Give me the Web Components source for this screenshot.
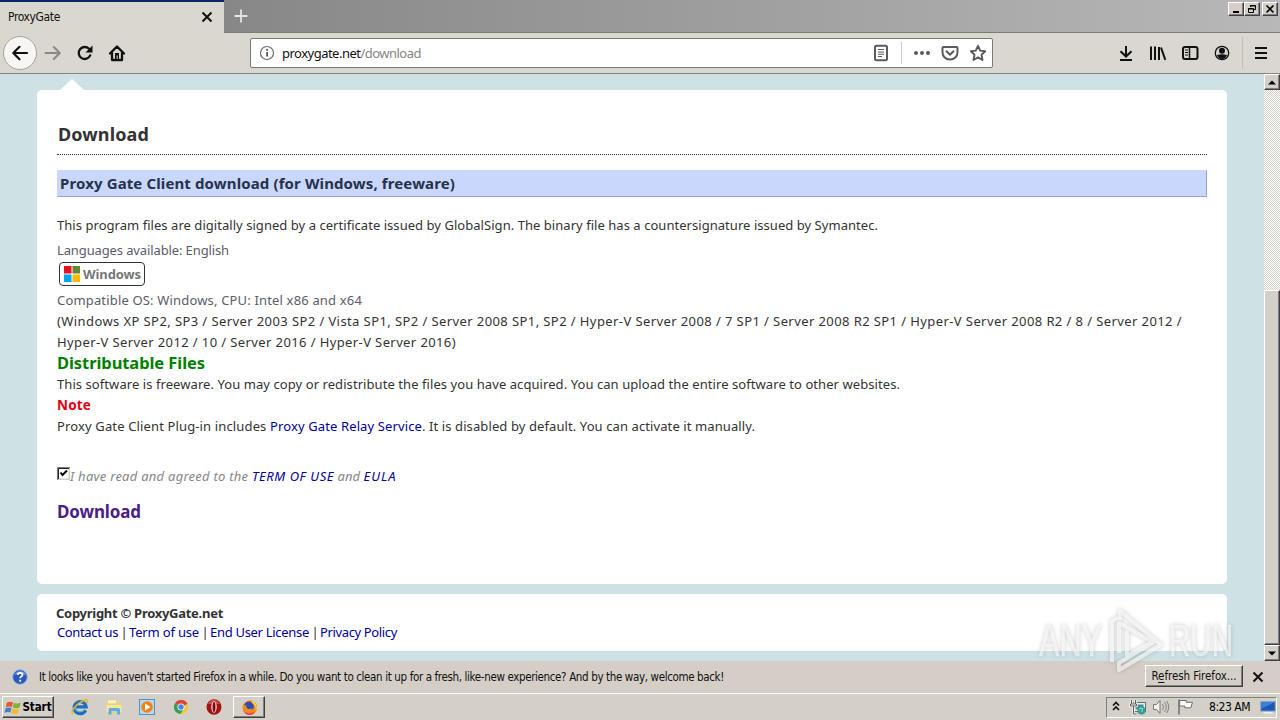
<!DOCTYPE html>
<html lang="en">
<head>
<meta charset="utf-8">
<title>ProxyGate</title>
<style>
	html, body {
		margin: 0;
		height: 100%;
		overflow: hidden;
	}
</style>
</head>
<body>
<desktop-screen></desktop-screen>

<script>
const UI_FONT = `"DejaVu Sans Condensed", "DejaVu Sans", sans-serif`;
const PAGE_FONT = `"Noto Sans", "Open Sans", sans-serif`;

const ICONS = {
	back: `<path d="M17 10H3.500M9.500 3.800L3.300 10l6.200 6.200" fill="none" stroke="#111" stroke-width="2.200" stroke-linecap="round" stroke-linejoin="round"/>`,
	forward: `<path d="M2.500 10H16.500M10.800 4l6 6-6 6" fill="none" stroke="#8b8983" stroke-width="2" stroke-linecap="round" stroke-linejoin="round"/>`,
	reload: `<path d="M15.200 12.400A6 6 0 1 1 14 5.800" fill="none" stroke="#111" stroke-width="2.300" stroke-linecap="round"/><path d="M17.500 2.500V9.500H10.500Z" fill="#111"/>`,
	home: `<path d="M3 10.500L10 3.500l7 7M5 10v7h10v-7" fill="none" stroke="#111" stroke-width="2.300" stroke-linecap="round" stroke-linejoin="round"/><path d="M8 10h4v6H8z" fill="#111"/><path d="M9.700 12.500h1v3.500h-1z" fill="#ddd"/>`,
	info: `<circle cx="10" cy="10" r="6.500" fill="none" stroke="#6a6a6a" stroke-width="1.200"/><path d="M9.200 9h1.800v4.500H9.200zM9.200 6h1.800v1.700H9.200z" fill="#555"/>`,
	reader: `<rect x="4" y="2.800" width="12" height="14.400" rx="1.500" fill="none" stroke="#5a5a5a" stroke-width="2"/><path d="M7 6.500h6M7 9h6M7 11.200h6M7 13.500h4" stroke="#5a5a5a" stroke-width="1"/>`,
	dots: `<g fill="#5a5a5a"><circle cx="4" cy="10" r="2"/><circle cx="10" cy="10" r="2"/><circle cx="16" cy="10" r="2"/></g>`,
	pocket: `<path d="M3.500 4h13q1 0 1 1v4.500a7.500 7 0 0 1-15 0V5q0-1 1-1z" fill="none" stroke="#5a5a5a" stroke-width="2"/><path d="M6.500 8.300l3.500 3.400 3.500-3.400" fill="none" stroke="#5a5a5a" stroke-width="2" stroke-linecap="round" stroke-linejoin="round"/>`,
	star: `<path d="M10 2.800l2.200 4.800 5 .6-3.700 3.500 1 5.300-4.500-2.600L5.500 17l1-5.300L2.800 8.200l5-.6z" fill="none" stroke="#5a5a5a" stroke-width="1.900" stroke-linejoin="round"/>`,
	download: `<path d="M10 3v10M4.500 8.300L10 13.500l5.500-5.200M4 17h12" fill="none" stroke="#111" stroke-width="2"/>`,
	library: `<path d="M3 3.500v13.500M7 3.500v13.500M11 4v13M13 4.500l4.300 12.300" stroke="#111" stroke-width="2" fill="none"/>`,
	sidebar: `<rect x="3" y="4" width="14.500" height="12" rx="2" fill="none" stroke="#111" stroke-width="2"/><path d="M9.500 4v12" stroke="#111" stroke-width="1.500"/><path d="M5 7h3M5 9.500h3M5 12h3" stroke="#111"/>`,
	account: `<circle cx="10" cy="10" r="6.700" fill="none" stroke="#111" stroke-width="1.300"/><circle cx="10" cy="7.800" r="3" fill="#111"/><path d="M5 12q5-1.500 10 0-1.500 4-5 4t-5-4z" fill="#111"/>`,
	menu: `<path d="M4 5h12M4 10h12M4 15h12" stroke="#111" stroke-width="2"/>`,
	close: `<path d="M5.500 5.500l9 9M14.500 5.500l-9 9" stroke="#111" stroke-width="2"/>`,
	plus: `<path d="M10 2v16M2 10h16" stroke="#e6e6e6" stroke-width="2.200"/>`,
	help: `<circle cx="10" cy="10" r="7.300" fill="#2858bd" stroke="#9ab5e6"/><path d="M4.500 8Q6 3.800 11 4.300q4.500.7 4.700 4Q10 6 4.500 8z" fill="#7299e2"/><path d="M7.700 7.800q.2-2 2.500-2 2.300.1 2.300 2 0 1.200-1.500 1.900-.8.400-.8 1.600M10.200 12.700v2" fill="none" stroke="#fff" stroke-width="1.800"/>`,
	windows: `<g><path d="M2 4.500Q6 2 9.500 4L8 9.500Q4.500 8 1 10z" fill="#e85a25"/><path d="M10.500 4.500Q14 6.200 18.500 4L17 10q-4 1.800-8-.2z" fill="#7fb23a"/><path d="M.7 11Q4.500 9.200 7.700 10.800L6.300 16Q3 14.600-.7 16.500z" fill="#3f7fcf"/><path d="M8.800 11q3.700 2 8 .2L15 17q-4 1.700-7.600-.4z" fill="#f3bb2d"/></g>`,
	ie: `<path d="M15.600 13.200a6 6 0 1 1 .5-3.400H5.800" fill="none" stroke="#1b70bd" stroke-width="3.200"/><path d="M14.600 12.500a5.500 5.500 0 0 1-9.700-2" fill="none" stroke="#4eb4ec" stroke-width="1.200"/><path d="M3 17.200C-.5 15.500 5 8.500 11 5s8-2.500 5.700 1.200" fill="none" stroke="#e6b52b" stroke-width="1.500"/>`,
	folder: `<path d="M3 4h6l1.500 1.800H17V16H3z" fill="#ecd276"/><path d="M4 3.300h8v3H4z" fill="#fff5bb"/><path d="M2.500 8h15v7h-15z" fill="#f5e6a1"/><path d="M4.500 17.500v-5q0-1.500 1.500-1.500h8.500q1.500 0 1.500 1.500v5h-3v-3.300H7.500v3.300z" fill="#65abd9"/>`,
	player: `<rect x="2.500" y="2.500" width="15" height="15" fill="#b8d8ef" stroke="#4f93cc"/><circle cx="10" cy="10" r="5.800" fill="#f08318"/><path d="M8 6.500l5.500 3.500L8 13.500z" fill="#fff"/>`,
	chrome: `<circle cx="10" cy="10" r="7" fill="#f4c83a"/><path d="M10 10L4 6.300A7 7 0 0 1 16.300 7z" fill="#dc4437"/><path d="M10 3a7 7 0 0 1 6.300 4H10z" fill="#dc4437"/><path d="M10 10L4 6.300A7 7 0 0 0 9.500 17l2.500-4z" fill="#2f9e57"/><circle cx="10" cy="10" r="3.600" fill="#f6f6f6"/><circle cx="10" cy="10" r="2.700" fill="#4584ea"/>`,
	opera: `<ellipse cx="10" cy="10" rx="7.500" ry="7.800" fill="#a31215"/><path d="M4 7Q6 2.500 10 2.700t6 4.300z" fill="#cf4b45"/><ellipse cx="10" cy="10" rx="2.700" ry="5.800" fill="#f6e9e6"/><ellipse cx="10" cy="10" rx="1.500" ry="5" fill="#7b0c10"/>`,
	firefox: `<circle cx="10.500" cy="10" r="7.500" fill="#f36b22"/><circle cx="9.500" cy="9" r="5" fill="#294fb4"/><path d="M11 1.800q7 2.500 6.800 9-1 6.700-7.500 6.900Q4 17.500 2.700 11l.5-5 1.600 2 2.200-.5q-1 2 .8 3.500 2.700 1.700 5.200-.7-.2 1.500-1.700 2.500 4-.7 3.700-4.500-.3-3.500-4-6.500z" fill="#f58a20"/><path d="M11 1.800q7 2.500 6.800 9l-1.300 3q.5-6-3.500-8.300z" fill="#ffd13c"/><path d="M2.700 11q2 5.500 8 5.200 3 0 5-2-1.500 3.300-5.500 3.500Q4.500 17.500 2.700 11z" fill="#e32653"/>`,
	chevrons: `<path d="M7 8.500l3-3 3 3M7 13l3-3 3 3" fill="none" stroke="#111" stroke-width="1.700"/>`,
	network: `<rect x="5.500" y="5.500" width="12" height="9" fill="#e4eff0" stroke="#53757a"/><rect x="7.500" y="7.500" width="8" height="5" fill="#4c8998"/><path d="M3.500 3v4M7.500 3v4M2.500 7h6v2h-6zM5.500 9v8h3" fill="none" stroke="#f2f2ee" stroke-width="2.400"/><path d="M3.500 3v4M7.500 3v4M2.500 7h6v2h-6zM5.500 9v8h3" fill="none" stroke="#5d6060"/><circle cx="13.500" cy="13.500" r="4" fill="#349e91"/><path d="M11 12q2-2 4 0-2 1-1 3" fill="none" stroke="#a8ded3"/>`,
	volume: `<path d="M2.500 7.500h3L9 3.500v13l-3.500-4h-3z" fill="#f2f1ed" stroke="#777"/><path d="M11.500 7q2 3 0 6M13.500 5q3.500 5 0 10M15.700 4q4 6 0 12" fill="none" stroke="#85837e"/>`,
	flag: `<path d="M4 2.500v15" stroke="#6e6e6e" stroke-width="1.500"/><path d="M4.700 3.500h6.500v1.800h6.300l-1.700 5.500h-6V9H4.700z" fill="#fff" stroke="#6e6e6e"/>`,
	desktop: `<rect x="2" y="4" width="16" height="10.500" fill="#1d58b6" stroke="#88a4c8"/><path d="M2.500 12V4.500h15z" fill="#3c80d8"/><path d="M5 16.500h10" stroke="#f4f4f4" stroke-width="1.500"/>`,
};

// Registers an element whose shadow root is cloned from one template.
function define (name, css, html, setup)
{
	const template = document.createElement("template");
	template.innerHTML = `<style>
		a { color: #00009c; text-decoration: none; }
		${css}
	</style>${html}`;
	customElements.define(name, class extends HTMLElement {
		constructor ()
		{
			super();
			this.attachShadow({mode:"open"});
			this.shadowRoot.append(template.content.cloneNode(true));
		}

		connectedCallback ()
		{
			if (setup) setup.call(this);
		}
	});
}

define("icon-glyph", `
	:host { display: inline-flex; flex: none; }
	svg { display: block; overflow: visible; }
`, `<svg viewBox="0 0 20 20" width="20" height="20"></svg>`, function ()
{
	const svg = this.shadowRoot.querySelector("svg");
	svg.innerHTML = ICONS[this.getAttribute("name")];
	svg.setAttribute("width", this.getAttribute("size") || 20);
	svg.setAttribute("height", this.getAttribute("size") || 20);
});

// One line of text, tracked so that it fills the given width.
define("fit-text", `
	:host { display: inline-block; white-space: pre; flex: none; }
`, `<slot></slot>`, function ()
{
	const width = parseFloat(this.getAttribute("w"));
	const natural = this.getBoundingClientRect().width;
	this.style.letterSpacing = (width - natural) / this.textContent.length + "px";
	this.style.width = width + "px";
});

define("classic-button", `
	:host {
		display: flex;
		align-items: center;
		justify-content: center;
		box-sizing: border-box;
		flex: none;
		background: #d4d0c8;
		border: 1px solid;
		border-color: #fff #404040 #404040 #fff;
		box-shadow: inset -1px -1px #808080;
	}
`, `<slot></slot>`);

define("tab-strip", `
	:host {
		display: flex;
		height: 33px;
		background: linear-gradient(90deg, #878787 17%, #a0a0a0 60%, #b8b8b8);
		font: 12px ${UI_FONT};
		color: #111;
	}
	.tab {
		display: flex;
		align-items: center;
		justify-content: space-between;
		box-sizing: border-box;
		width: 224px;
		padding: 0 7px 0 8px;
		border-top: 2px solid #0a246a;
		background: #dad7d0;
	}
	.tab fit-text, .tab icon-glyph { margin-top: -2px; }
	.new { padding: 8px 0 0 9px; }
	.rest {
		flex: 1;
		display: flex;
		box-sizing: border-box;
		border-bottom: 1px solid #7d7b78;
	}
	.buttons {
		display: flex;
		margin-left: auto;
		padding: 2px 2px 0 0;
	}
	classic-button { width: 16px; height: 14px; }
	classic-button:last-child { margin-left: 2px; }
`, `
	<div class="tab"><fit-text w="52">ProxyGate</fit-text><icon-glyph name="close"></icon-glyph></div>
	<div class="rest">
		<icon-glyph class="new" name="plus" size="16"></icon-glyph>
		<div class="buttons">
			<classic-button><svg width="12" height="10"><path d="M3 8h6" stroke="#000" stroke-width="2"/></svg></classic-button>
			<classic-button><svg width="12" height="10"><path d="M4.500 3V1.500h5v4H8M4 2h6M2.500 4.500h5v4h-5zM2 5h6" fill="none" stroke="#000"/></svg></classic-button>
			<classic-button><svg width="12" height="10"><path d="M2.500 1.500l7 7M9.500 1.500l-7 7" stroke="#000" stroke-width="1.600"/></svg></classic-button>
		</div>
	</div>
`);

define("nav-bar", `
	:host {
		display: flex;
		align-items: center;
		box-sizing: border-box;
		height: 41px;
		background: #dad7d0;
		border-bottom: 1px solid #85857f;
		font: 13px ${PAGE_FONT};
	}
	.side { display: flex; align-items: center; }
	.left { width: 250px; gap: 12px; box-sizing: border-box; padding-left: 3px; }
	.back {
		display: flex;
		align-items: center;
		justify-content: center;
		box-sizing: border-box;
		width: 34px;
		height: 34px;
		border: 1px solid #a5a29d;
		border-radius: 50%;
		background: #f7f6f4;
		margin-right: -6px;
	}
	.url {
		display: flex;
		align-items: center;
		box-sizing: border-box;
		width: 743px;
		height: 30px;
		border: 1px solid #7c7a77;
		border-radius: 2px;
		background: #fff;
		padding: 0 4px 0 6px;
		color: #111;
	}
	.url fit-text { margin: 0 auto 0 5px; }
	.url span { color: #85857f; }
	.actions { display: flex; gap: 8px; }
	.rule { width: 1px; height: 22px; background: #ccc; margin: 0 10px; }
	.right { margin-left: auto; gap: 12px; padding-right: 9px; }
	.right .rule { height: 32px; margin: 0 -4px 0 -3px; background: #c0bdb7; }
	.right icon-glyph:nth-child(4) { margin-right: 1px; }
`, `
	<div class="side left">
		<div class="back"><icon-glyph name="back"></icon-glyph></div>
		<icon-glyph name="forward"></icon-glyph>
		<icon-glyph name="reload"></icon-glyph>
		<icon-glyph name="home"></icon-glyph>
	</div>
	<div class="url">
		<icon-glyph name="info"></icon-glyph>
		<fit-text w="139">proxygate.net<span>/download</span></fit-text>
		<icon-glyph name="reader"></icon-glyph>
		<div class="rule"></div>
		<div class="actions">
			<icon-glyph name="dots"></icon-glyph>
			<icon-glyph name="pocket"></icon-glyph>
			<icon-glyph name="star"></icon-glyph>
		</div>
	</div>
	<div class="side right">
		<icon-glyph name="download"></icon-glyph>
		<icon-glyph name="library"></icon-glyph>
		<icon-glyph name="sidebar"></icon-glyph>
		<icon-glyph name="account"></icon-glyph>
		<div class="rule"></div>
		<icon-glyph name="menu"></icon-glyph>
	</div>
`);

define("scroll-bar", `
	:host {
		display: flex;
		flex-direction: column;
		width: 16px;
		background: repeating-conic-gradient(#fff 0 25%, #d4d0c8 0 50%) 0 0 / 2px 2px;
	}
	classic-button { height: 16px; }
	.thumb { height: 355px; margin-top: auto; }
`, `
	<classic-button><svg width="8" height="5"><path d="M0 4.500h8L4 .5z"/></svg></classic-button>
	<classic-button class="thumb"></classic-button>
	<classic-button><svg width="8" height="5"><path d="M0 .5h8L4 4.500z"/></svg></classic-button>
`);

define("page-card", `
	:host {
		display: block;
		box-sizing: border-box;
		background: #fff;
		border-radius: 5px;
	}
`, `<slot></slot>`);

define("os-badge", `
	:host {
		display: flex;
		align-items: center;
		box-sizing: border-box;
		width: 86px;
		height: 24px;
		padding-left: 4px;
		gap: 3px;
		border: 1px solid #333;
		border-radius: 4px;
		font: bold 13px ${PAGE_FONT};
		color: #777;
	}
`, `
	<svg width="16" height="16"><path d="M0 0h7.500v7.500H0z" fill="#e81123"/><path d="M8.500 0H16v7.500H8.500z" fill="#5c8a35"/><path d="M0 8.500h7.500V16H0z" fill="#00a4ef"/><path d="M8.500 8.500H16V16H8.500z" fill="#ffb900"/></svg>
	<fit-text w="58">Windows</fit-text>
`);

define("download-page", `
	:host {
		display: block;
		flex: 1;
		background: #cee2e5;
		font: 13px/21px ${PAGE_FONT};
		color: #333;
	}
	.notch {
		width: 24px;
		height: 11px;
		margin: 5px 0 0 60px;
		background: #fff;
		clip-path: polygon(50% 0, 100% 100%, 0 100%);
	}
	page-card { margin: 0 37px 10px; height: 494px; padding: 30px 20px 0; }
	.line { display: flex; height: 21px; }
	h1, h2, h3, h4 { margin: 0; display: flex; height: 21px; }
	h1 { font-size: 18px; line-height: 28px; height: 34px; border-bottom: 1px dotted #333; padding-left: 1px; }
	h2 {
		box-sizing: border-box;
		height: 27px;
		margin: 15px 0 18px;
		padding-left: 3px;
		border: 1px solid #8ba7dc;
		border-left-color: #c9d7fc;
		border-top-color: #c9d7fc;
		background: #c9d7fc;
		font-size: 15px;
		line-height: 24px;
		color: #26324a;
	}
	h2 fit-text { margin-left: -1px; }
	h3 { font-size: 16.5px; line-height: 19px; color: #008000; }
	h4 { font-size: 13.5px; line-height: 20px; color: #e00012; }
	.soft { color: #5c5c69; }
	.languages { margin-top: 4px; }
	os-badge { margin: 1px 0 4px 2px; }
	.agree { margin-top: 29px; font-style: italic; color: #868686; }
	.agree svg { margin-top: 1px; }
	.get { margin-top: 15px; font-weight: bold; font-size: 17px; line-height: 20px; }
	.get a { color: #4b1d87; }
	page-card.footer { height: 57px; padding: 10px 19px; margin-bottom: 0; line-height: 19px; }
	.footer .line { height: 19px; }
	.footer .links { padding-left: 1px; }
	.bold { font-weight: bold; }
`, `
	<div class="notch"></div>
	<page-card>
		<h1><fit-text w="91">Download</fit-text></h1>
		<h2><fit-text w="395">Proxy Gate Client download (for Windows, freeware)</fit-text></h2>
		<div class="line"><fit-text w="821">This program files are digitally signed by a certificate issued by GlobalSign. The binary file has a countersignature issued by Symantec.</fit-text></div>
		<div class="line soft languages"><fit-text w="172">Languages available: English</fit-text></div>
		<os-badge></os-badge>
		<div class="line soft"><fit-text w="305">Compatible OS: Windows, CPU: Intel x86 and x64</fit-text></div>
		<div class="line"><fit-text w="1125">(Windows XP SP2, SP3 / Server 2003 SP2 / Vista SP1, SP2 / Server 2008 SP1, SP2 / Hyper-V Server 2008 / 7 SP1 / Server 2008 R2 SP1 / Hyper-V Server 2008 R2 / 8 / Server 2012 /</fit-text></div>
		<div class="line"><fit-text w="399">Hyper-V Server 2012 / 10 / Server 2016 / Hyper-V Server 2016)</fit-text></div>
		<h3><fit-text w="148">Distributable Files</fit-text></h3>
		<div class="line"><fit-text w="843">This software is freeware. You may copy or redistribute the files you have acquired. You can upload the entire software to other websites.</fit-text></div>
		<h4><fit-text w="34">Note</fit-text></h4>
		<div class="line"><fit-text w="213">Proxy Gate Client Plug-in includes </fit-text><fit-text w="152"><a href="#">Proxy Gate Relay Service</a></fit-text><fit-text w="333">. It is disabled by default. You can activate it manually.</fit-text></div>
		<div class="line agree">
			<svg width="13" height="13"><path d="M0 0h13v13H0z" fill="#d4d0c8"/><path d="M.5 13V.5H13" fill="none" stroke="#777"/><path d="M1.500 12V1.500H12" fill="none" stroke="#222"/><path d="M2 2h9.500v9.500H2z" fill="#fff"/><path d="M3.500 5.500L5.500 8l4.500-4.500" fill="none" stroke="#000" stroke-width="2"/></svg>
			<fit-text w="182">I have read and agreed to the </fit-text><fit-text w="82"><a href="#">TERM OF USE</a></fit-text><fit-text w="29.500"> and </fit-text><fit-text w="33"><a href="#">EULA</a></fit-text>
		</div>
		<div class="line get"><fit-text w="84"><a href="#">Download</a></fit-text></div>
	</page-card>
	<page-card class="footer">
		<div class="line bold"><fit-text w="167">Copyright © ProxyGate.net</fit-text></div>
		<div class="line links"><fit-text w="61"><a href="#">Contact us</a></fit-text><fit-text w="11"> | </fit-text><fit-text w="70"><a href="#">Term of use</a></fit-text><fit-text w="11"> | </fit-text><fit-text w="99"><a href="#">End User License</a></fit-text><fit-text w="11"> | </fit-text><fit-text w="77"><a href="#">Privacy Policy</a></fit-text></div>
	</page-card>
`);

define("notice-bar", `
	:host {
		display: flex;
		align-items: center;
		box-sizing: border-box;
		height: 32px;
		padding: 0 12px 0 10px;
		background: #d4cec7;
		font: 11.5px ${UI_FONT};
		color: #111;
	}
	.message { margin: 0 auto 0 9px; }
	classic-button { width: 98px; height: 22px; margin: -2px 5px 0 0; }
	u { text-underline-offset: 2px; }
`, `
	<icon-glyph name="help"></icon-glyph>
	<fit-text class="message" w="685">It looks like you haven’t started Firefox in a while. Do you want to clean it up for a fresh, like-new experience? And by the way, welcome back!</fit-text>
	<classic-button><fit-text w="85">R<u>e</u>fresh Firefox...</fit-text></classic-button>
	<icon-glyph name="close"></icon-glyph>
`);

define("task-bar", `
	:host {
		display: flex;
		align-items: center;
		box-sizing: border-box;
		height: 27px;
		padding: 0 3px 0 2px;
		border-top: 1px solid #fff;
		background: #d4d0c8;
		font: 12px ${UI_FONT};
		color: #000;
	}
	classic-button { height: 22px; }
	.start { width: 52px; font-size: 11.5px; font-weight: bold; gap: 1px; }
	.pins { display: flex; gap: 13.500px; margin: 0 9px 0 16px; }
	.open { width: 32px; }
	.tray {
		display: flex;
		align-items: center;
		box-sizing: border-box;
		width: 171px;
		height: 21px;
		margin-left: auto;
		border: 1px solid;
		border-color: #808080 #fff #fff #808080;
	}
	.icons { display: flex; gap: 3.500px; margin-right: 14.500px; }
	.icons :first-child { margin: 0 -2px 0 -1px; }
	.tray fit-text { margin-right: 9px; }
`, `
	<classic-button class="start"><icon-glyph name="windows" size="17"></icon-glyph><fit-text w="29">Start</fit-text></classic-button>
	<div class="pins">
		<icon-glyph name="ie"></icon-glyph>
		<icon-glyph name="folder"></icon-glyph>
		<icon-glyph name="player"></icon-glyph>
		<icon-glyph name="chrome"></icon-glyph>
		<icon-glyph name="opera"></icon-glyph>
	</div>
	<classic-button class="open"><icon-glyph name="firefox" size="19"></icon-glyph></classic-button>
	<div class="tray">
		<div class="icons">
			<icon-glyph name="chevrons"></icon-glyph>
			<icon-glyph name="network"></icon-glyph>
			<icon-glyph name="volume"></icon-glyph>
			<icon-glyph name="flag"></icon-glyph>
		</div>
		<fit-text w="41">8:23 AM</fit-text>
		<icon-glyph name="desktop" size="18"></icon-glyph>
	</div>
`);

define("any-run-mark", `
	:host {
		position: absolute;
		left: 1030px;
		top: 599px;
		pointer-events: none;
	}
	svg { display: block; overflow: visible; filter: drop-shadow(0 0 2px rgba(90, 90, 90, .5)); }
	text { font: 44px "Liberation Sans", sans-serif; fill: rgba(255, 255, 255, .6); stroke: rgba(255, 255, 255, .3); }
	path { fill: none; stroke: rgba(255, 255, 255, .65); stroke-width: 4; stroke-linejoin: round; }
`, `
	<svg width="245" height="78">
		<text x="9" y="57" textLength="63" lengthAdjust="spacingAndGlyphs">ANY</text>
		<path d="M82 63V22l6-3M89 54V24l34 19-34 21v7L131 46 90 12v9M97 31v26l25-14"/>
		<text x="139" y="57" textLength="64" lengthAdjust="spacingAndGlyphs">RUN</text>
	</svg>
`);

define("desktop-screen", `
	:host {
		display: flex;
		flex-direction: column;
		position: relative;
		width: 1280px;
		height: 720px;
		overflow: hidden;
	}
	.view { display: flex; height: 587px; }
	download-page { display: flow-root; }
`, `
	<tab-strip></tab-strip>
	<nav-bar></nav-bar>
	<div class="view">
		<download-page></download-page>
		<scroll-bar></scroll-bar>
	</div>
	<notice-bar></notice-bar>
	<task-bar></task-bar>
	<any-run-mark></any-run-mark>
`);
</script>
</body>
</html>
